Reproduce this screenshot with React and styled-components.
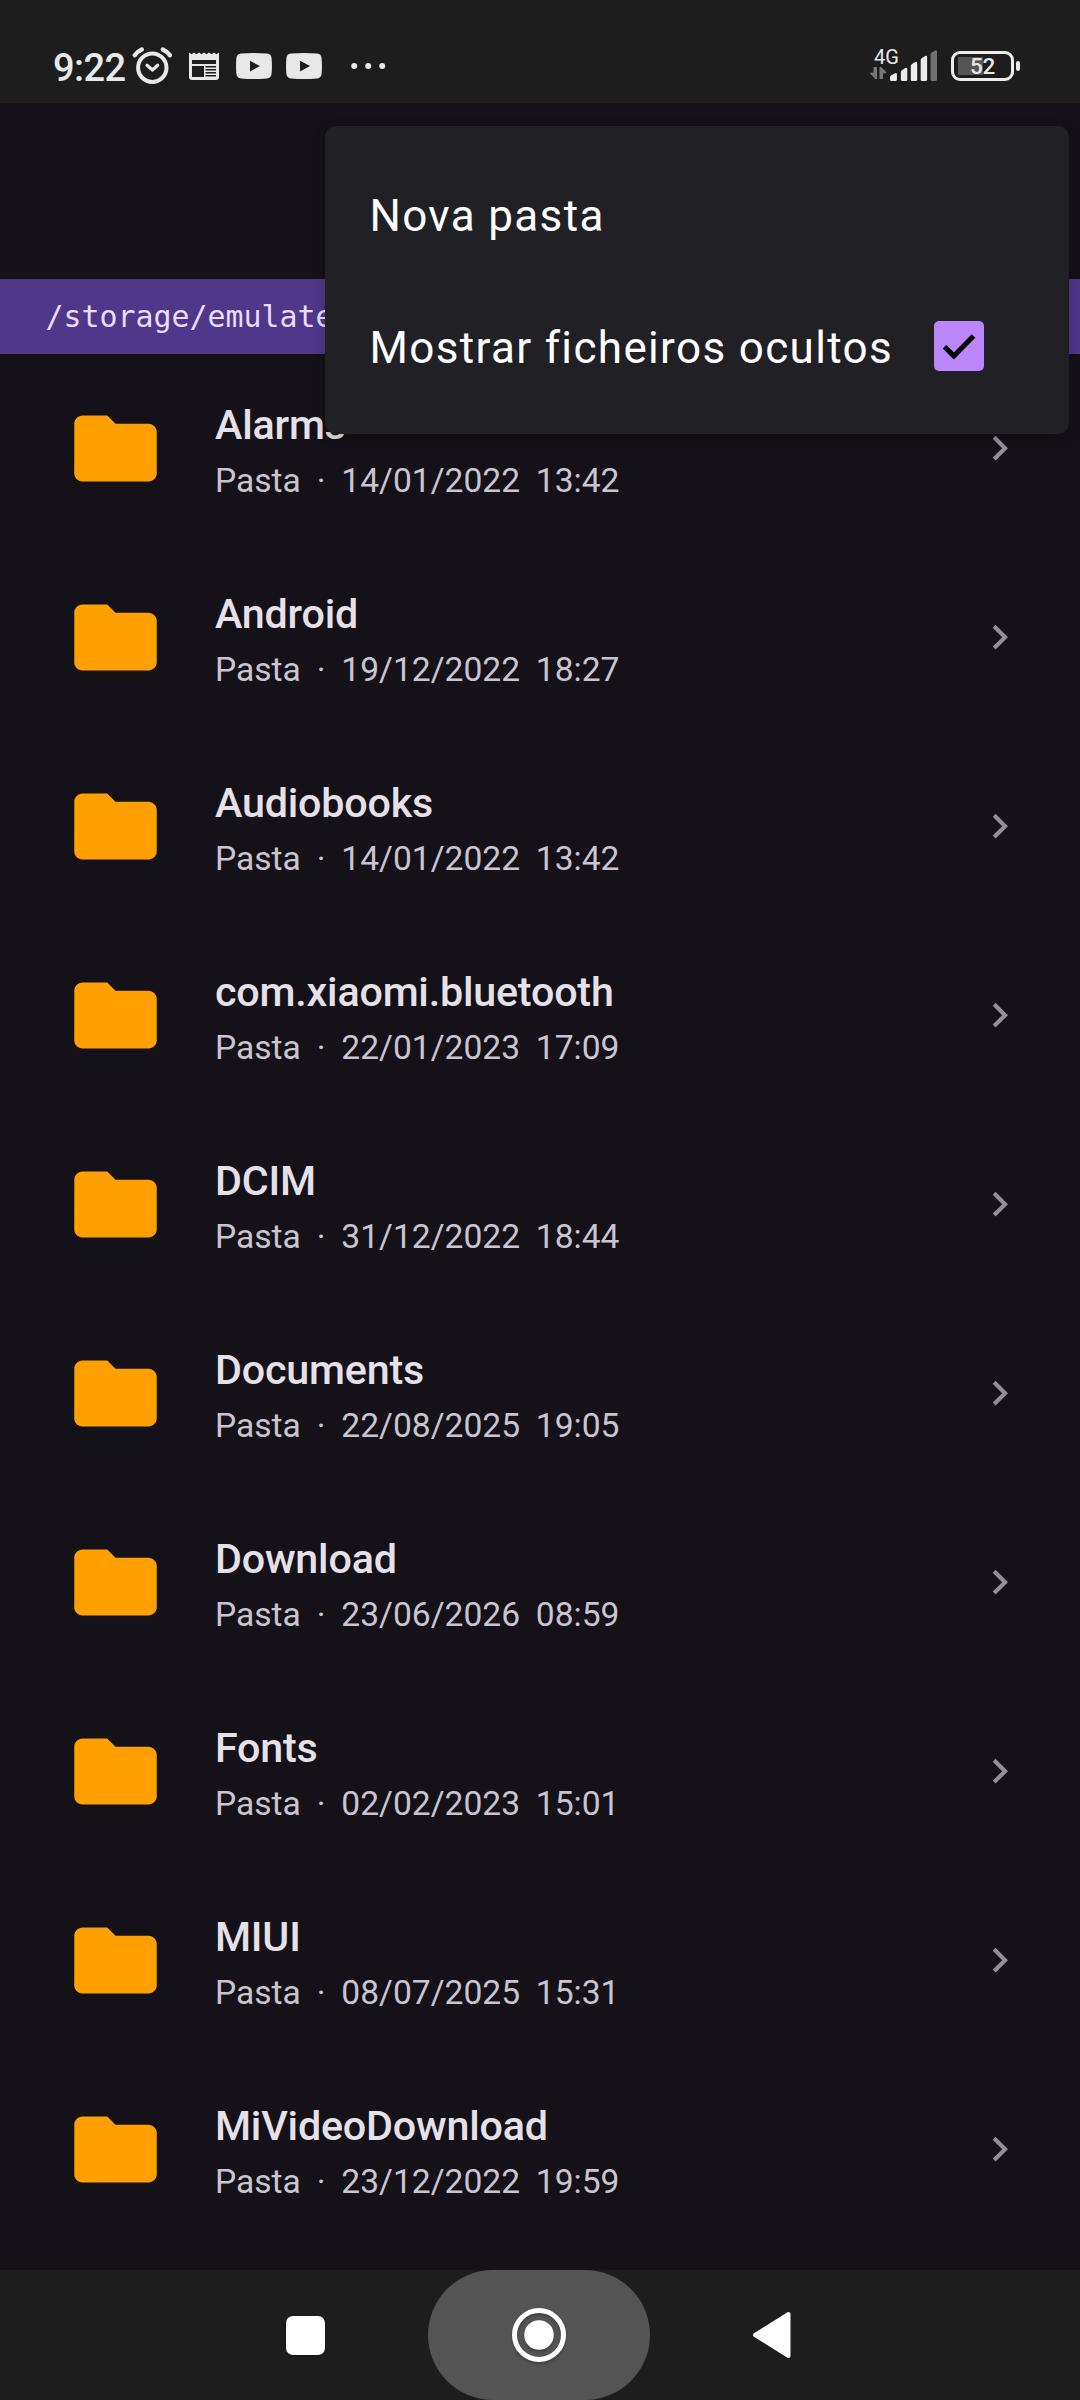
import React from "react";
import styled, { createGlobalStyle } from "styled-components";

const GlobalStyle = createGlobalStyle`
  *, *::before, *::after { box-sizing: border-box; }
  html, body { margin: 0; padding: 0; background: #141118; }
  body { font-family: Roboto, "Noto Sans", sans-serif; overflow: hidden; }
  svg { display: block; flex: none; }
`;

const Screen = styled.div`
  position: relative;
  display: flex;
  flex-direction: column;
  width: 1080px;
  height: 2400px;
  overflow: hidden;
  background: #141118;
`;

const StatusBar = styled.header`
  display: flex;
  justify-content: space-between;
  flex: none;
  height: 103px;
  padding: 40px 60px 0 53px;
  background: #1d1d1d;
  color: #e8e8e8;
`;

const StatusGroup = styled.div`
  display: flex;
  align-items: center;
  height: 52px;
`;

const Clock = styled.time`
  width: 79px;
  padding-top: 4px;
  font-size: 38px;
  font-weight: 500;
  line-height: 52px;
  letter-spacing: -0.6px;
  white-space: nowrap;
`;

const StatusIcon = styled.svg`
  margin-left: ${(p) => p.$gap || 0}px;
`;

const Network = styled.div`
  display: flex;
  align-items: flex-end;
  height: 52px;
`;

const NetworkLabel = styled.div`
  display: flex;
  flex-direction: column;
  width: 20px;
  height: 42px;
  margin-bottom: 10px;
  font-size: 20px;
  line-height: 20px;
  white-space: nowrap;
`;

const NetworkText = styled.span`
  margin: 7px 0 0 4px;
  height: 20px;
`;

const SignalBars = styled.svg`
  margin: 0 1px 11px -0.5px;
`;

const Battery = styled.div`
  display: flex;
  align-items: center;
  margin-left: 13px;
`;

const BatteryBody = styled.div`
  display: flex;
  align-items: center;
  justify-content: center;
  width: 63px;
  height: 30px;
  border: 3px solid #ececec;
  border-radius: 9px;
  background: linear-gradient(#555, #555) 4px 3px / 25px 18px no-repeat;
  font-size: 22.5px;
  font-weight: 500;
  line-height: 24px;
  letter-spacing: -0.4px;
`;

const BatteryTip = styled.i`
  width: 4px;
  height: 10px;
  margin-left: 2px;
  border-radius: 2px;
  background: #e8e8e8;
`;

const Toolbar = styled.div`
  flex: none;
  height: 176px;
`;

const PathBar = styled.div`
  flex: none;
  display: flex;
  align-items: center;
  height: 75px;
  padding: 1px 0 0 45.5px;
  background: #4f378a;
  color: #eaddff;
  font-family: "DejaVu Sans Mono", "Liberation Mono", monospace;
  font-size: 29.9px;
  line-height: 40px;
`;

const FileList = styled.main`
  flex: 1;
  min-height: 0;
  overflow: hidden;
`;

const Row = styled.div`
  display: flex;
  align-items: center;
  height: 189px;
  padding: 0 56px 0 66px;
`;

const RowText = styled.div`
  flex: 1;
  margin-left: 50px;
  padding-top: 4px;
`;

const Name = styled.div`
  margin-bottom: 4px;
  color: #e6e0e9;
  font-size: 41.25px;
  font-weight: 500;
  line-height: 56px;
  letter-spacing: -0.2px;
`;

const Meta = styled.div`
  color: #cac4d0;
  font-size: 33.6px;
  line-height: 48px;
  word-spacing: -0.4px;
  white-space: pre;
`;

const Menu = styled.div`
  position: absolute;
  left: 325px;
  top: 126px;
  width: 744px;
  height: 308px;
  padding: 22px 0;
  border-radius: 11px;
  background: #212025;
  box-shadow: 0 3px 12px rgba(0, 0, 0, 0.22);
`;

const MenuItem = styled.div`
  display: flex;
  align-items: center;
  justify-content: space-between;
  height: 132px;
  padding: 0 85px 0 44.5px;
  color: #fff;
  font-size: 44px;
  line-height: 52px;
  letter-spacing: 1.35px;
  white-space: nowrap;
`;

const MenuLabel = styled.span`
  padding-top: 3px;
`;

const Checkbox = styled.div`
  width: 50px;
  height: 50px;
  border-radius: 5px;
  background: #bb86fc;
`;

const NavBar = styled.nav`
  display: flex;
  align-items: center;
  flex: none;
  height: 130px;
  padding-left: 285.5px;
  background: #1d1d1d;
`;

const RecentButton = styled.div`
  width: 39px;
  height: 39px;
  border-radius: 7px;
  background: #fff;
  box-shadow: 0 1px 2px rgba(0, 0, 0, 0.3);
`;

const HomeButton = styled.div`
  display: flex;
  align-items: center;
  justify-content: center;
  width: 222px;
  height: 130px;
  margin-left: 103.5px;
  border-radius: 65px;
  background: #545454;
`;

const HomeIcon = styled.svg`
  filter: drop-shadow(0 2px 1.5px rgba(0, 0, 0, 0.25));
`;

const BackIcon = styled.svg`
  margin-left: 102px;
`;

const folders = [
  ["Alarms", "14/01/2022", "13:42"],
  ["Android", "19/12/2022", "18:27"],
  ["Audiobooks", "14/01/2022", "13:42"],
  ["com.xiaomi.bluetooth", "22/01/2023", "17:09"],
  ["DCIM", "31/12/2022", "18:44"],
  ["Documents", "22/08/2025", "19:05"],
  ["Download", "23/06/2026", "08:59"],
  ["Fonts", "02/02/2023", "15:01"],
  ["MIUI", "08/07/2025", "15:31"],
  ["MiVideoDownload", "23/12/2022", "19:59"],
];

const AlarmIcon = () => (
  <StatusIcon width="40" height="38" viewBox="0 0 40 38" fill="none" stroke="#e8e8e8" strokeLinecap="round">
    <circle cx="20.3" cy="20.7" r="14.2" strokeWidth="4" />
    <path d="M2.800 8.200Q5.500 4.500 9.800 2.600M37.800 8.200Q35 4.500 30.800 2.600" strokeWidth="4.400" />
    <path d="M15 18.3l5.5 4.7 5.2-4.7" strokeWidth="3.2" strokeLinejoin="round" />
  </StatusIcon>
);

const NewsIcon = () => (
  <StatusIcon $gap={17} width="30" height="28" viewBox="0 0 30 28">
    <path fill="#e8e8e8" d="M0 .5l2.500 1.700L5 .5l2.500 1.700L10 .5l2.500 1.700L15 .5l2.500 1.700L20 .5l2.500 1.700L25 .5l2.500 1.700L30 .5v24.500a3 3 0 0 1-3 3H3a3 3 0 0 1-3-3z" />
    <path fill="#1d1d1d" d="M3 8h24v4H3zM3 14h12v11H3zM16.5 14H27v1.6H16.5zM16.5 17H27v1.4H16.5zM16.5 20H27v1.4H16.5zM16.5 23H27v1.6H16.5z" />
  </StatusIcon>
);

const VideoIcon = ({ gap }) => (
  <StatusIcon $gap={gap} width="36" height="26" viewBox="0 0 36 26">
    <path fill="#e8e8e8" d="M5 .6Q18-.5 31 .6q4.2.4 4.6 4.6.7 7.8 0 15.6-.4 4.2-4.6 4.6-13 1.1-26 0Q.8 25 .4 20.8q-.7-7.8 0-15.6Q.8 1 5 .6z" />
    <path fill="#1d1d1d" d="M14 7.800v10.600l10-5.300z" />
  </StatusIcon>
);

const MoreIcon = () => (
  <StatusIcon $gap={29} width="35" height="8" viewBox="0 0 35 8" fill="#e8e8e8">
    <circle cx="3.2" cy="4" r="3" />
    <circle cx="17.2" cy="4" r="3" />
    <circle cx="31.2" cy="4" r="3" />
  </StatusIcon>
);

const DataArrows = () => (
  <svg width="17" height="12" viewBox="0 0 17 12" fill="#777">
    <path d="M3.5 0H7v12H5.5L0 6.5V5.7h3.5zM9.5 12V0H11l5.5 5.2v1H13V12z" />
  </svg>
);

const SignalIcon = () => (
  <SignalBars width="47.5" height="31" viewBox="0 0 48 31" preserveAspectRatio="none" fill="#ececec">
    <path d="M0 29.5V27q0-1 1-1.5l4-2.3q2-.8 2 1V29.5q0 1.5-1.5 1.5H1.5Q0 31 0 29.5z" />
    <path d="M11 29.5V22q0-1 1-1.700l3.500-2.300q2-.8 2 1v10.500q0 1.500-1.500 1.500h-3.500q-1.500 0-1.500-1.500z" />
    <path d="M21 29.500V16q0-1 1-1.700l3.500-2.300q2-.8 2 1v16.500q0 1.500-1.500 1.500h-3.500q-1.500 0-1.500-1.500z" />
    <path d="M31 29.500V10q0-1 1-1.700l3.500-2.300q2-.8 2 1v22.500q0 1.500-1.500 1.500h-3.500q-1.500 0-1.500-1.500z" />
    <path fill="#707070" d="M41 29.500V4.500q0-1 1-1.700l3.500-2.300q2-.8 2 1v28q0 1.500-1.500 1.500h-3.500q-1.500 0-1.500-1.500z" />
  </SignalBars>
);

const FolderIcon = () => (
  <svg width="99" height="99" viewBox="0 0 24 24" fill="#ffa000">
    <path d="M10 4H4c-1.100 0-1.990.9-1.990 2L2 18c0 1.100.9 2 2 2h16c1.100 0 2-.9 2-2V8c0-1.100-.9-2-2-2h-8l-2-2z" />
  </svg>
);

const ChevronIcon = () => (
  <svg width="49.5" height="49.5" viewBox="0 0 24 24" fill="#938f99">
    <path d="M10 5.700L8.590 7.110 13.170 11.700l-4.580 4.590L10 17.700l6-6z" />
  </svg>
);

export default function App() {
  return (
    <Screen>
      <GlobalStyle />
      <StatusBar>
        <StatusGroup>
          <Clock>9:22</Clock>
          <AlarmIcon />
          <NewsIcon />
          <VideoIcon gap={17} />
          <VideoIcon gap={14} />
          <MoreIcon />
        </StatusGroup>
        <StatusGroup>
          <Network>
            <NetworkLabel>
              <NetworkText>4G</NetworkText>
              <DataArrows />
            </NetworkLabel>
            <SignalIcon />
          </Network>
          <Battery>
            <BatteryBody>52</BatteryBody>
            <BatteryTip />
          </Battery>
        </StatusGroup>
      </StatusBar>
      <Toolbar />
      <PathBar>/storage/emulated/0</PathBar>
      <FileList>
        {folders.map(([name, date, time]) => (
          <Row key={name}>
            <FolderIcon />
            <RowText>
              <Name>{name}</Name>
              <Meta>{`Pasta  ·  ${date}  ${time}`}</Meta>
            </RowText>
            <ChevronIcon />
          </Row>
        ))}
      </FileList>
      <NavBar>
        <RecentButton />
        <HomeButton>
          <HomeIcon width="56" height="56" viewBox="0 0 56 56">
            <circle cx="28" cy="28" r="24.500" fill="none" stroke="#fff" strokeWidth="5" />
            <circle cx="28" cy="28" r="14.800" fill="#fff" />
          </HomeIcon>
        </HomeButton>
        <BackIcon width="40" height="48" viewBox="0 0 40 48">
          <path d="M3 24L36.500 3v42z" fill="#fff" stroke="#fff" strokeWidth="4" strokeLinejoin="round" />
        </BackIcon>
      </NavBar>
      <Menu>
        <MenuItem>
          <MenuLabel>Nova pasta</MenuLabel>
        </MenuItem>
        <MenuItem>
          <MenuLabel>Mostrar ficheiros ocultos</MenuLabel>
          <Checkbox>
            <svg width="50" height="50" viewBox="0 0 50 50" fill="none" stroke="#000" strokeWidth="5">
              <path d="M10.500 25.800l9.300 9.100L39.500 15" />
            </svg>
          </Checkbox>
        </MenuItem>
      </Menu>
    </Screen>
  );
}
